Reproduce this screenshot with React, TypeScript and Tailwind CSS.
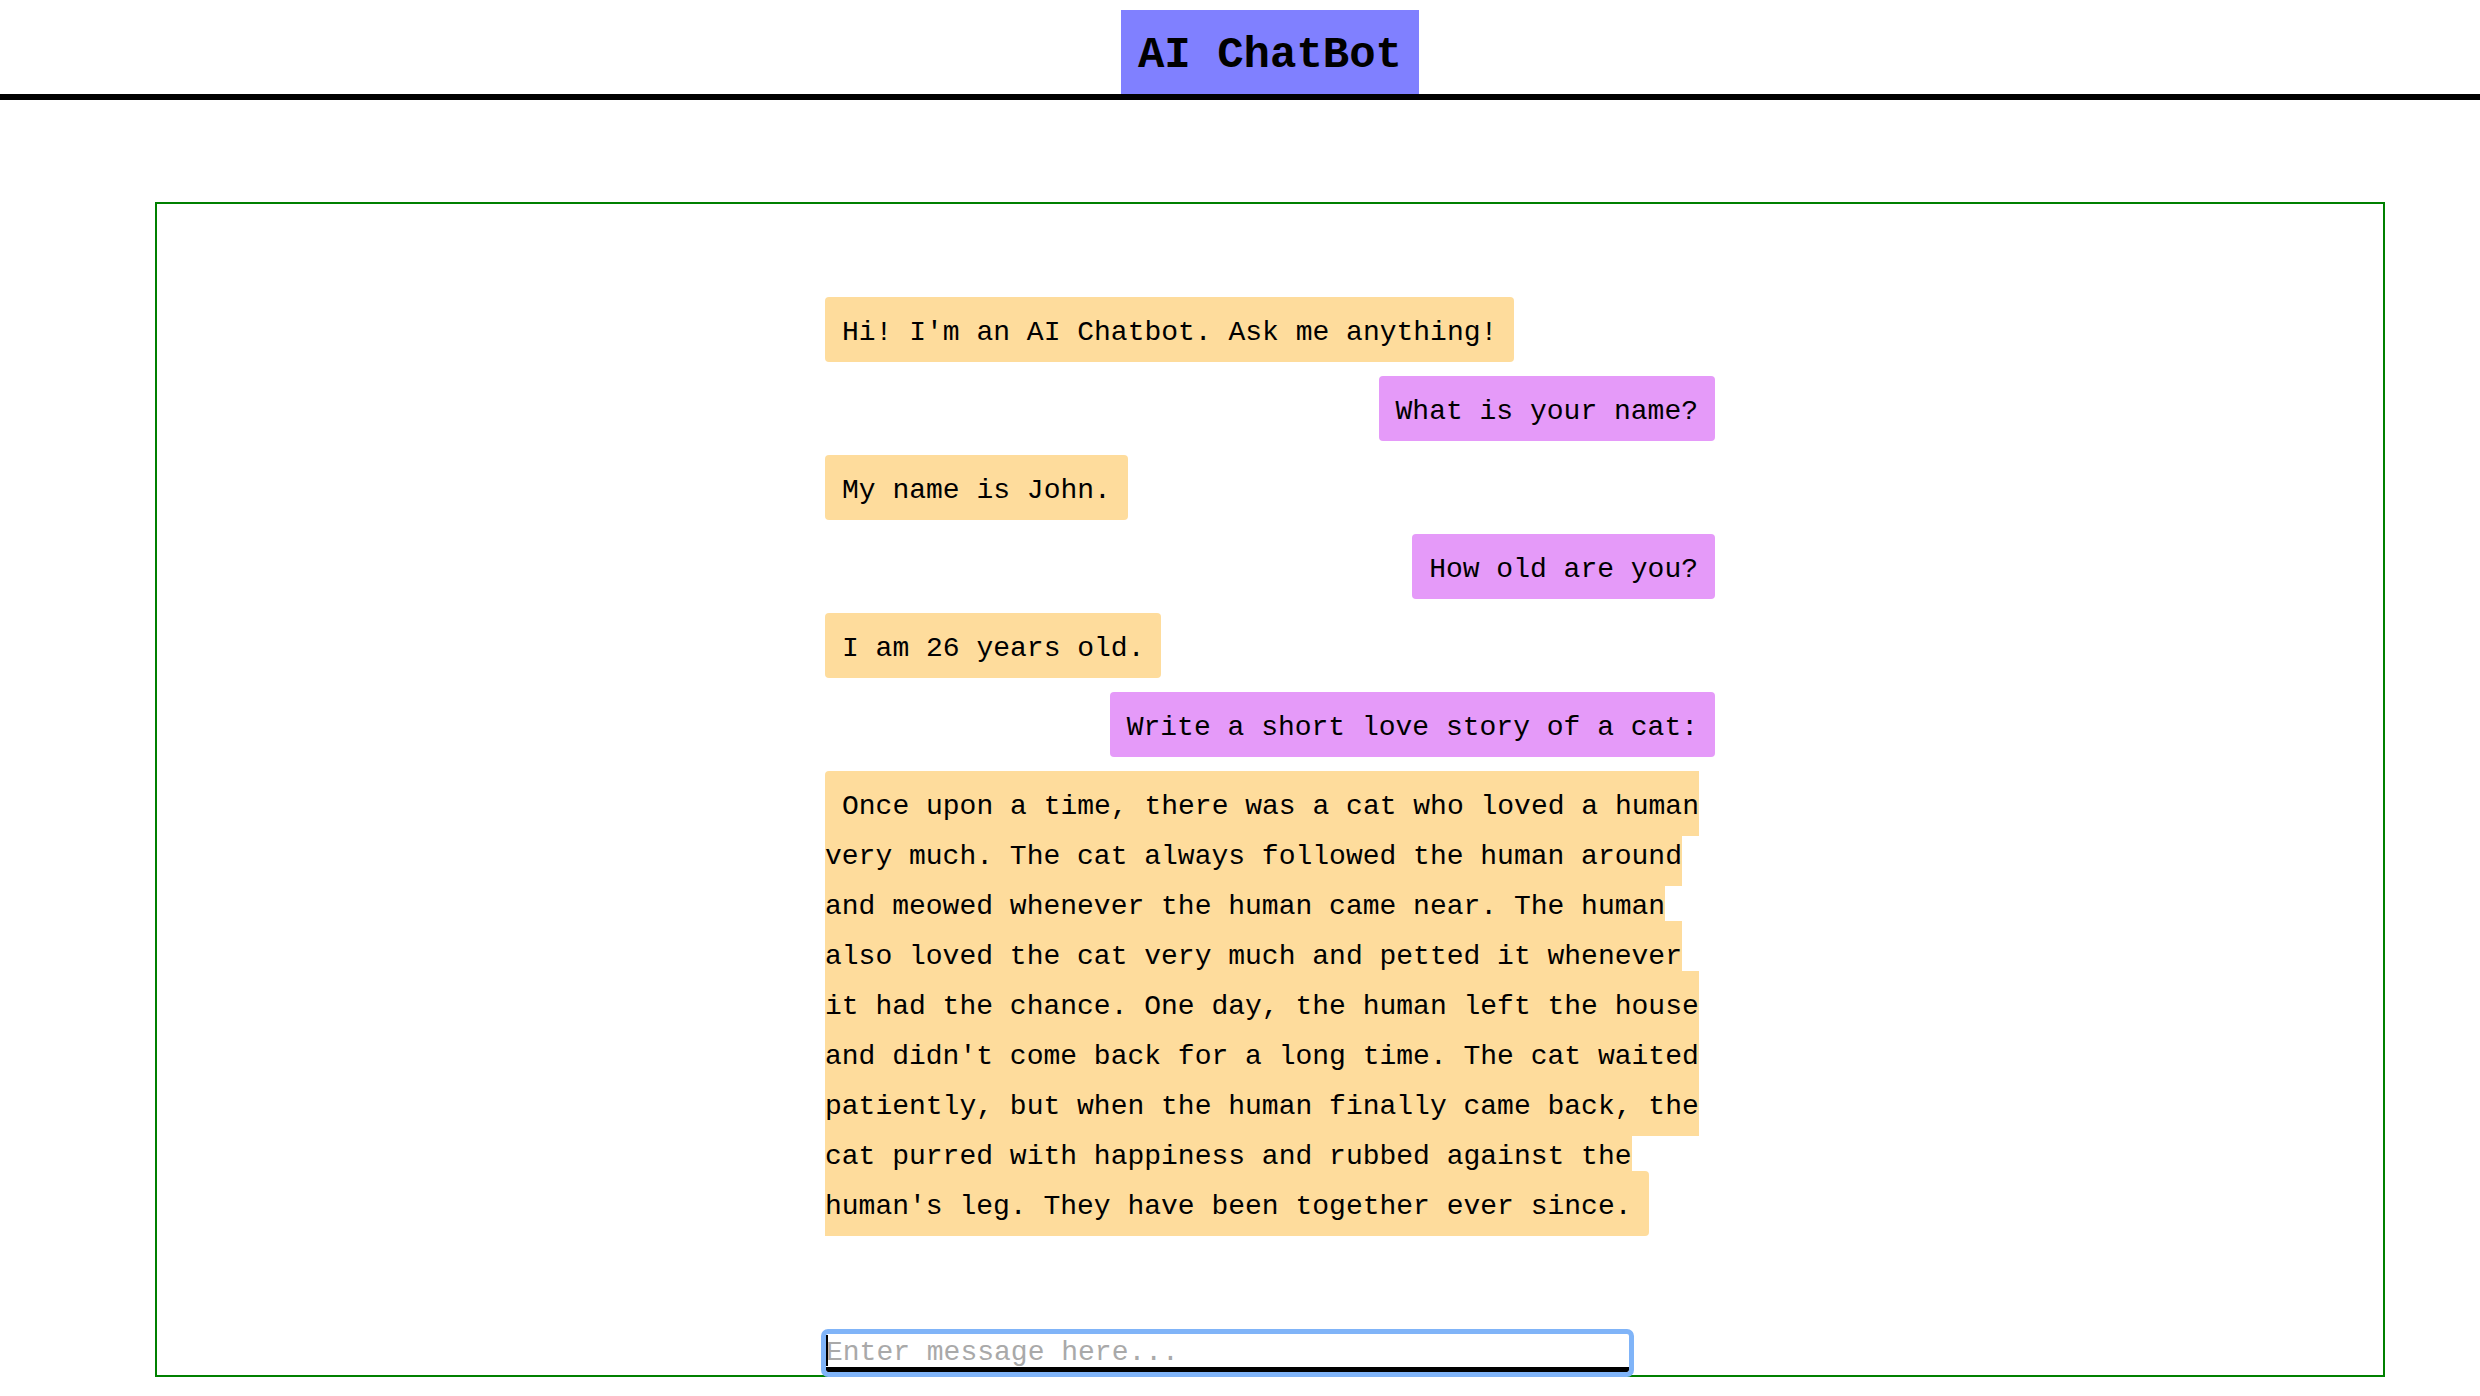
import React from "react";

type Message = { from: "bot" | "user"; text: string };

const messages: Message[] = [
  { from: "bot", text: "Hi! I'm an AI Chatbot. Ask me anything!" },
  { from: "user", text: "What is your name?" },
  { from: "bot", text: "My name is John." },
  { from: "user", text: "How old are you?" },
  { from: "bot", text: "I am 26 years old." },
  { from: "user", text: "Write a short love story of a cat:" },
  {
    from: "bot",
    text: "Once upon a time, there was a cat who loved a human very much. The cat always followed the human around and meowed whenever the human came near. The human also loved the cat very much and petted it whenever it had the chance. One day, the human left the house and didn't come back for a long time. The cat waited patiently, but when the human finally came back, the cat purred with happiness and rubbed against the human's leg. They have been together ever since.",
  },
];

function Bubble({ msg }: { msg: Message }) {
  const isUser = msg.from === "user";
  return (
    <div className={isUser ? "text-right leading-[50px]" : "text-left leading-[50px]"}>
      <span
        className={
          isUser
            ? "bg-[#e59af9] px-[17px] py-[17px] rounded-[4px]"
            : "bg-[#fedc9c] px-[17px] py-[17px] rounded-[4px]"
        }
      >
        <span className="relative top-[3px]">{msg.text}</span>
      </span>
    </div>
  );
}

export default function App() {
  const [text, setText] = React.useState("");

  return (
    <div className="min-h-screen bg-white text-black font-['Liberation_Mono','Courier_New',monospace]">
      <header className="flex justify-center border-b-[6px] border-black pt-[10px] pl-[60px]">
        <h1 className="bg-[#8080ff] px-[17px] pt-[20px] pb-[14px] text-[44px] font-bold leading-[normal]">
          AI ChatBot
        </h1>
      </header>

      <main className="ml-[155px] mt-[102px] w-[2230px] h-[1175px] border-2 border-[#008000] flex flex-col items-center">
        <div className="w-[890px] pt-[101px] flex flex-col gap-[29px] text-[28px]">
          {messages.map((m, i) => (
            <Bubble key={i} msg={m} />
          ))}
        </div>

        <div className="w-[890px] mt-auto mb-[3px] pl-px">
          <div className="relative w-[803px]">
            <input
              value={text}
              onChange={(e) => setText(e.target.value)}
              placeholder="Enter message here..."
              className="block w-[803px] h-[38px] pt-[3px] border-b-[5px] border-black text-[28px] leading-[30px] rounded-[2px] outline-[5px] outline-solid outline-[#80b4f8] placeholder:text-[#a9a9a9]"
            />
            {text === "" && (
              <span className="absolute left-0 top-[1px] w-[2px] h-[31px] bg-black pointer-events-none" />
            )}
          </div>
        </div>
      </main>
    </div>
  );
}
